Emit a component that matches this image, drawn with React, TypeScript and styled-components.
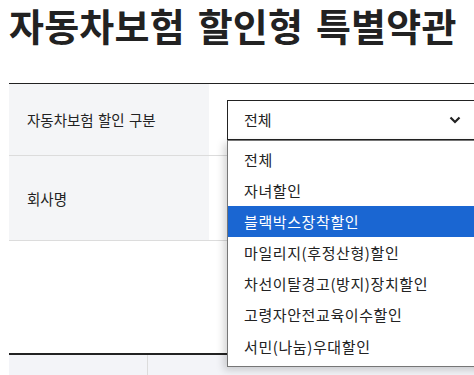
import React, { ReactElement } from 'react';
import styled, { createGlobalStyle } from 'styled-components';

const GlobalStyle = createGlobalStyle`
  html, body {
    margin: 0;
    padding: 0;
    background: #fff;
    overflow: hidden;
  }
  body {
    font-family: "Noto Sans CJK KR", "Noto Sans", sans-serif;
    color: #222;
  }
`;

const Page = styled.div`
  width: 474px;
  height: 375px;
  padding: 0 0 0 9px;
  box-sizing: border-box;
  overflow: hidden;
`;

const Title = styled.h1`
  margin: 0;
  padding-top: 0;
  font-size: 38px;
  font-weight: 700;
  line-height: 50px;
  letter-spacing: 0.2px;
  word-spacing: 4px;
  white-space: nowrap;
  color: #222;
`;

const Table = styled.div`
  margin-top: 33px;
  width: 465px;
  border-top: 1px solid #222;
`;

const Row = styled.div<{ $height: number }>`
  display: grid;
  grid-template-columns: 200px 1fr;
  height: ${(p) => p.$height}px;
  border-bottom: 1px solid #dcdcdc;
`;

const Head = styled.div`
  display: flex;
  align-items: center;
  padding-left: 18px;
  background: #f4f5f7;
  font-size: 14.5px;
  letter-spacing: 0;
  word-spacing: 1px;
  color: #222;
`;

const Cell = styled.div`
  display: flex;
  align-items: center;
  padding-left: 18px;
`;

const SelectWrap = styled.div`
  position: relative;
  width: 300px;
`;

const SelectBox = styled.div`
  display: flex;
  align-items: center;
  height: 40px;
  box-sizing: border-box;
  border: 1px solid #222;
  padding: 0 0 0 16px;
  font-size: 15px;
  color: #222;
`;

const Chevron = styled.svg`
  position: absolute;
  left: 222px;
  top: 16px;
`;

const List = styled.ul`
  position: absolute;
  top: 40px;
  left: 0;
  width: 100%;
  margin: 0;
  padding: 3px 0 4px;
  list-style: none;
  box-sizing: border-box;
  background: #fff;
  border: 1px solid #767676;
  box-shadow: -3px 3px 8px rgba(0, 0, 0, 0.18);
  z-index: 2;
`;

const Option = styled.li<{ $active?: boolean }>`
  height: 31.2px;
  line-height: 31px;
  padding-left: 16px;
  font-size: 15px;
  letter-spacing: 0.6px;
  color: ${(p) => (p.$active ? '#fff' : '#222')};
  background: ${(p) => (p.$active ? '#1a66d2' : 'transparent')};
  white-space: nowrap;
`;

const Bottom = styled.div`
  margin-top: 112px;
  width: 465px;
  display: grid;
  grid-template-columns: 139px 1fr;
  border-top: 2px solid #222;
  height: 30px;
`;

const BottomCell = styled.div<{ $divider?: boolean }>`
  background: #f3f4f8;
  border-right: ${(p) => (p.$divider ? '1px solid #dcdcdc' : 'none')};
`;

const options = [
  '전체',
  '자녀할인',
  '블랙박스장착할인',
  '마일리지(후정산형)할인',
  '차선이탈경고(방지)장치할인',
  '고령자안전교육이수할인',
  '서민(나눔)우대할인',
];

function App(): ReactElement {
  return (
    <Page>
      <GlobalStyle />
      <Title>자동차보험 할인형 특별약관</Title>
      <Table>
        <Row $height={71}>
          <Head>자동차보험 할인 구분</Head>
          <Cell>
            <SelectWrap>
              <SelectBox>전체</SelectBox>
              <Chevron width="12" height="8" viewBox="0 0 12 8">
                <path d="M1.5 1.5 L6 6 L10.5 1.5" fill="none" stroke="#222" strokeWidth="2.2" />
              </Chevron>
              <List>
                {options.map((o) => (
                  <Option key={o} $active={o === '블랙박스장착할인'}>
                    {o}
                  </Option>
                ))}
              </List>
            </SelectWrap>
          </Cell>
        </Row>
        <Row $height={84}>
          <Head>회사명</Head>
          <Cell />
        </Row>
      </Table>
      <Bottom>
        <BottomCell $divider />
        <BottomCell />
      </Bottom>
    </Page>
  );
}

export default App;
